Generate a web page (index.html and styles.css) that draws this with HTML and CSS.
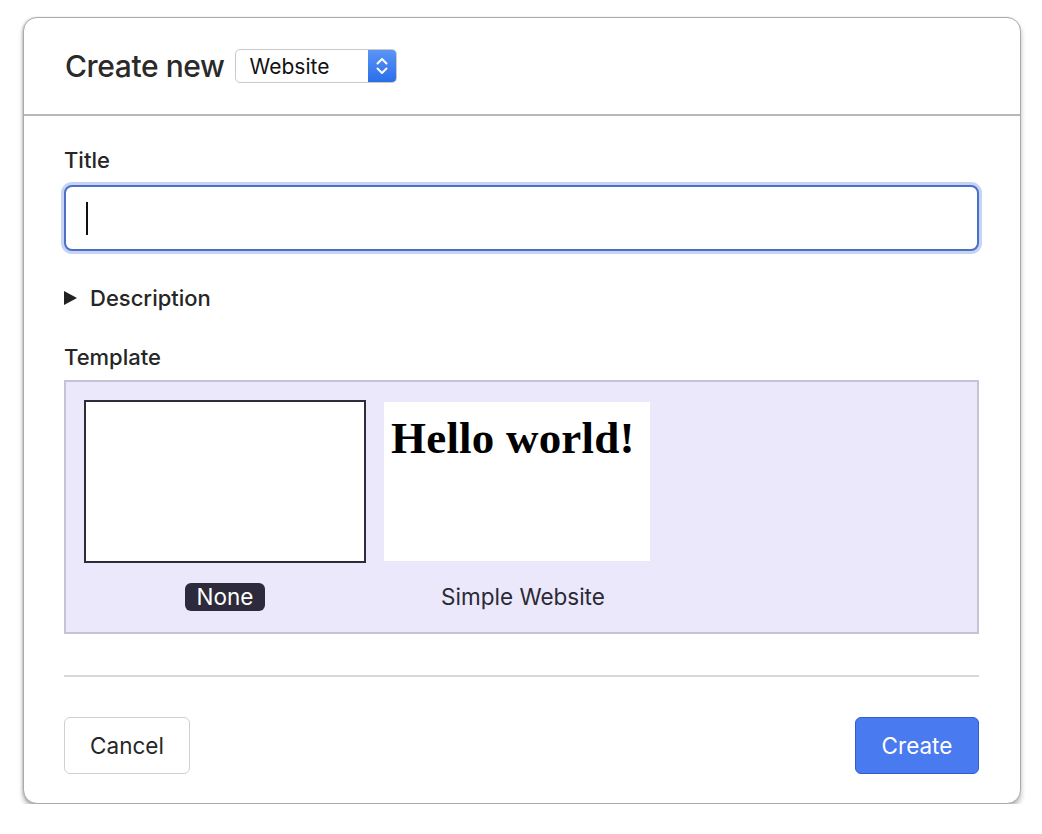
FILE: index.html
```html
<!DOCTYPE html>
<html>
<head>
<meta charset="utf-8">
<link rel="stylesheet" href="styles.css">
</head>
<body>
<div class="dialog">
  <div class="header">
    <h2 class="heading">Create new</h2>
    <div class="select">
      <span class="select-text">Website</span>
      <span class="select-arrow">
        <svg width="14" height="22" viewBox="0 0 14 22"><path d="M2.5 8.5 L7 4 L11.5 8.5 M2.5 13.5 L7 18 L11.5 13.5" fill="none" stroke="#fff" stroke-width="2" stroke-linecap="round" stroke-linejoin="round"/></svg>
      </span>
    </div>
  </div>
  <div class="body">
    <label class="label">Title</label>
    <div class="input-wrap">
      <input class="input" type="text">
      <span class="caret"></span>
    </div>
    <div class="summary">
      <svg class="tri" width="13" height="14" viewBox="0 0 13 14"><path d="M0 0 L13 7 L0 14 Z" fill="#222"/></svg>
      <span>Description</span>
    </div>
    <div class="label label-template">Template</div>
    <div class="templates">
      <div class="tpl">
        <div class="thumb thumb-none"></div>
        <span class="tpl-name selected">None</span>
      </div>
      <div class="tpl tpl-2">
        <div class="thumb thumb-web"><span class="hello">Hello world!</span></div>
        <span class="tpl-name">Simple Website</span>
      </div>
    </div>
    <div class="rule"></div>
    <div class="actions">
      <button class="btn btn-cancel">Cancel</button>
      <button class="btn btn-create">Create</button>
    </div>
  </div>
</div>
</body>
</html>
```

FILE: styles.css
```css
* { box-sizing: border-box; }
body {
  margin: 0;
  background: #fff;
  font-family: Inter, "Liberation Sans", sans-serif;
  color: #262626;
}
.dialog {
  margin: 17px 0 0 23px;
  width: 998px;
  height: 787px;
  border: 1px solid #aaaaaa;
  border-radius: 14px;
  box-shadow: 0 4px 5px rgba(0,0,0,0.28), -1px 0 2px rgba(0,0,0,0.12);
  background: #fff;
  display: flex;
  flex-direction: column;
}
.header {
  height: 98px;
  border-bottom: 2px solid #b8b8b8;
  display: flex;
  align-items: center;
  padding-left: 41px;
  gap: 10px;
}
.heading {
  margin: 0;
  font-size: 30px;
  font-weight: 500;
  letter-spacing: -0.4px;
  color: #2a2a2a;
}
.select {
  width: 162px;
  height: 34px;
  border: 1px solid #c9c9c9;
  border-radius: 5px;
  display: flex;
  align-items: stretch;
  overflow: hidden;
  background: #fff;
}
.select-text {
  flex: 1;
  display: flex;
  align-items: center;
  padding-left: 14px;
  font-size: 21px;
  color: #111;
}
.select-arrow {
  width: 28px;
  background: linear-gradient(#5a94f6, #2a6ee8);
  display: flex;
  align-items: center;
  justify-content: center;
}
.body {
  padding: 31px 41px 0 40px;
  display: flex;
  flex-direction: column;
}
.label {
  display: block;
  font-size: 22px;
  font-weight: 500;
  line-height: 26px;
  color: #262626;
}
.input-wrap {
  position: relative;
  margin-top: 12px;
}
.input {
  display: block;
  width: 100%;
  height: 66px;
  border: 2px solid #4c70c6;
  border-radius: 8px;
  box-shadow: 0 0 0 3px #c6d3f3;
  outline: none;
  font-size: 20px;
  padding: 0 20px;
  caret-color: transparent;
}
.caret {
  position: absolute;
  left: 22px;
  top: 17px;
  width: 2px;
  height: 33px;
  background: #111;
}
.summary {
  margin-top: 34px;
  display: flex;
  align-items: center;
  gap: 13px;
  font-size: 22px;
  font-weight: 500;
  line-height: 26px;
}
.tri { display: block; }
.label-template {
  margin-top: 33px;
}
.templates {
  margin-top: 10px;
  height: 254px;
  background: #ebe8fb;
  border: 2px solid #c5c4d6;
  display: flex;
  gap: 18px;
  padding: 18px 18px 0 18px;
}
.tpl {
  display: flex;
  flex-direction: column;
  align-items: center;
}
.thumb {
  background: #fff;
}
.thumb-none {
  width: 282px;
  height: 163px;
  border: 2px solid #2e2c3b;
}
.tpl-2 { width: 276px; align-items: flex-start; }
.tpl-2 .tpl-name { align-self: center; margin-left: 2px; }
.thumb-web {
  width: 266px;
  height: 159px;
  margin-top: 2px;
  padding: 14px 0 0 7px;
  margin-bottom: 2px;
}
.hello {
  font-family: "Liberation Serif", serif;
  font-weight: bold;
  font-size: 45px;
  line-height: 44px;
  color: #000;
  letter-spacing: 0.2px;
  white-space: nowrap;
}
.tpl-name {
  margin-top: 20px;
  font-size: 22.5px;
  line-height: 28px;
  padding: 0 12px;
  color: #2a2a36;
}
.selected {
  background: #2d2b3b;
  color: #fff;
  border-radius: 6px;
}
.rule {
  margin-top: 41px;
  height: 2px;
  background: #d9d9d9;
}
.actions {
  margin-top: 40px;
  display: flex;
  justify-content: space-between;
}
.btn {
  height: 57px;
  font-family: Inter, "Liberation Sans", sans-serif;
  font-size: 22.5px;
  border-radius: 6px;
  padding: 0;
}
.btn-cancel {
  width: 126px;
  background: #fff;
  border: 1px solid #cdd1d6;
  color: #262626;
}
.btn-create {
  width: 124px;
  background: #4a7af0;
  border: 1px solid #2f5dcc;
  color: #fff;
}
```
